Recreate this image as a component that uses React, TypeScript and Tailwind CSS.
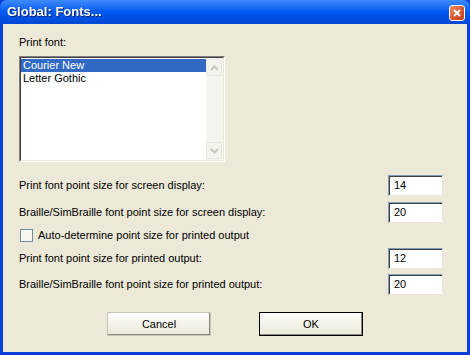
import React from "react";

const rows = [
  { label: "Print font point size for screen display:", value: "14" },
  { label: "Braille/SimBraille font point size for screen display:", value: "20" },
];

const printedRows = [
  { label: "Print font point size for printed output:", value: "12" },
  { label: "Braille/SimBraille font point size for printed output:", value: "20" },
];

function SizeRow({ label, value }: { label: string; value: string }) {
  return (
    <div className="flex items-center justify-between h-[21px]">
      <span>{label}</span>
      <div className="w-[55px] h-[21px] bg-white border border-t-[#7f9db9] border-l-[#7f9db9] border-r-[#ece9d8] border-b-[#ece9d8] shadow-[inset_1px_1px_0_#404040] flex items-center pl-[5px]">
        {value}
      </div>
    </div>
  );
}

function ScrollButton({ up }: { up: boolean }) {
  return (
    <div className="w-[16px] h-[17px] bg-[#f4f3ee] border border-[#e8e7df] rounded-[2px] flex items-center justify-center">
      <svg width="9" height="6" viewBox="0 0 9 6">
        <path
          d={up ? "M1 5 L4.5 1.5 L8 5" : "M1 1 L4.5 4.5 L8 1"}
          stroke="#c9c7ba"
          strokeWidth="2"
          fill="none"
        />
      </svg>
    </div>
  );
}

export default function App() {
  return (
    <div
      className="w-[470px] h-[355px] flex flex-col bg-[#0a3fd8] text-[11px] text-black"
      style={{ fontFamily: "Tahoma, 'Liberation Sans', Arial, sans-serif" }}
    >
      {/* title bar */}
      <div className="h-[24px] flex items-center justify-between pl-[7px] pr-[5px] bg-gradient-to-b from-[#3d8bff] via-[#0058ee] to-[#0047d6] rounded-t-[7px]">
        <span className="text-white font-bold text-[13px] drop-shadow-[1px_1px_0_#0a2a80]">
          Global: Fonts...
        </span>
        <div className="w-[16px] h-[16px] mt-[2px] rounded-[3px] border border-white bg-gradient-to-br from-[#ec8f6e] via-[#dc5a30] to-[#c53f16] flex items-center justify-center">
          <svg width="8" height="8" viewBox="0 0 8 8">
            <path d="M1 1 L7 7 M7 1 L1 7" stroke="white" strokeWidth="2" />
          </svg>
        </div>
      </div>

      {/* body */}
      <div className="flex-1 mx-[3px] mb-[3px] bg-[#ece9d8] pl-[16px] pr-[24px] pt-[12px] flex flex-col">
        <div className="h-[13px] leading-[13px]">Print font:</div>

        {/* list box */}
        <div className="mt-[7px] w-[206px] h-[106px] flex border border-t-[#7f7f7f] border-l-[#7f7f7f] border-r-white border-b-white">
          <div className="flex-1 flex border border-t-[#404040] border-l-[#404040] border-r-[#ece9d8] border-b-[#ece9d8] bg-white">
            <div className="flex-1 pt-[1px]">
              <div className="h-[13px] leading-[13px] bg-[#316ac5] text-white pl-[2px]">Courier New</div>
              <div className="h-[13px] leading-[13px] pl-[2px]">Letter Gothic</div>
            </div>
            <div className="w-[17px] bg-[#f5f4ef] flex flex-col justify-between py-px">
              <ScrollButton up />
              <ScrollButton up={false} />
            </div>
          </div>
        </div>

        <div className="mt-[13px] flex flex-col gap-[6px]">
          {rows.map((r) => (
            <SizeRow key={r.label} label={r.label} value={r.value} />
          ))}
        </div>

        <div className="mt-[6px] h-[13px] flex items-center gap-[5px] pl-px">
          <div className="w-[13px] h-[13px] bg-white border border-[#1c5180] opacity-60" />
          <span>Auto-determine point size for printed output</span>
        </div>

        <div className="mt-[6px] flex flex-col gap-[5px]">
          {printedRows.map((r) => (
            <SizeRow key={r.label} label={r.label} value={r.value} />
          ))}
        </div>

        <div className="mt-[17px] flex gap-[48px] pl-[88px]">
          <button className="w-[104px] h-[24px] bg-gradient-to-b from-[#fdfdfb] to-[#ece9d8] border border-[#c8c5b4] shadow-[inset_-1px_-1px_0_#8c8a80] text-[11px]">
            Cancel
          </button>
          <button className="w-[104px] h-[24px] bg-gradient-to-b from-[#fdfdfb] to-[#ece9d8] border border-black shadow-[inset_-1px_-1px_0_#8c8a80] text-[11px]">
            OK
          </button>
        </div>
      </div>
    </div>
  );
}
